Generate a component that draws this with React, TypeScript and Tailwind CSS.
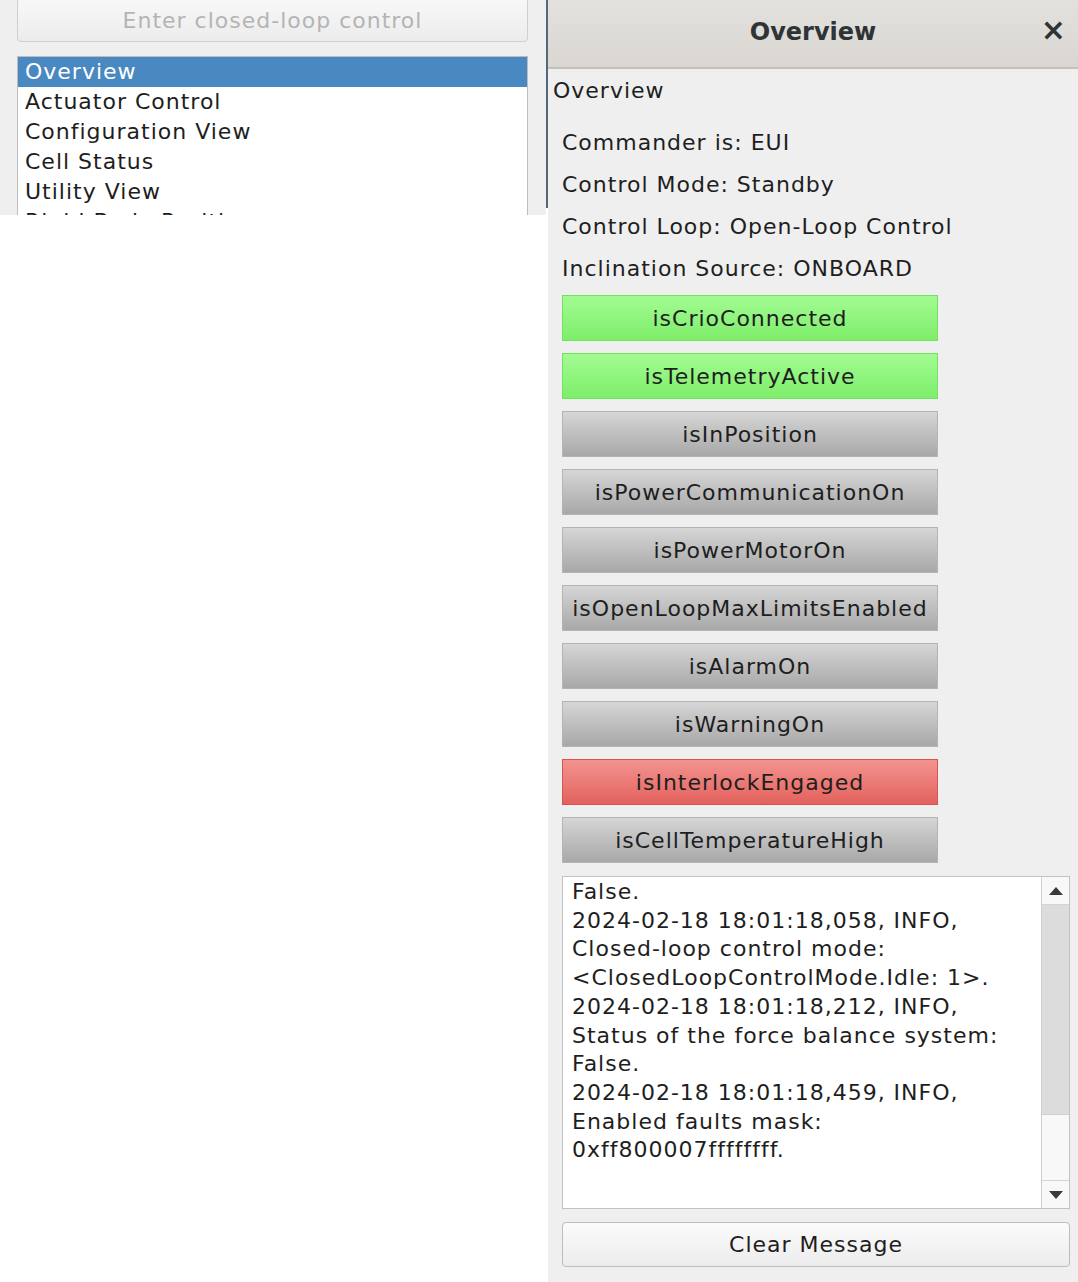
import React from 'react';

const font = { fontFamily: '"DejaVu Sans", "Noto Sans", sans-serif' };

type Flag = { label: string; state: 'on' | 'off' | 'alarm' };

const flags: Flag[] = [
  { label: 'isCrioConnected', state: 'on' },
  { label: 'isTelemetryActive', state: 'on' },
  { label: 'isInPosition', state: 'off' },
  { label: 'isPowerCommunicationOn', state: 'off' },
  { label: 'isPowerMotorOn', state: 'off' },
  { label: 'isOpenLoopMaxLimitsEnabled', state: 'off' },
  { label: 'isAlarmOn', state: 'off' },
  { label: 'isWarningOn', state: 'off' },
  { label: 'isInterlockEngaged', state: 'alarm' },
  { label: 'isCellTemperatureHigh', state: 'off' },
];

const flagStyle = {
  on: 'bg-gradient-to-b from-[#a2fb92] to-[#7eee6a] border-[#74e060]',
  off: 'bg-gradient-to-b from-[#d6d6d6] to-[#a8a8a8] border-[#b4b4b4]',
  alarm: 'bg-gradient-to-b from-[#f29390] to-[#e3615c] border-[#d65550]',
};

const views = ['Overview', 'Actuator Control', 'Configuration View', 'Cell Status', 'Utility View', 'Rigid Body Position'];

const logLines = [
  'False.',
  '2024-02-18 18:01:18,058, INFO,',
  'Closed-loop control mode:',
  '<ClosedLoopControlMode.Idle: 1>.',
  '2024-02-18 18:01:18,212, INFO,',
  'Status of the force balance system:',
  'False.',
  '2024-02-18 18:01:18,459, INFO,',
  'Enabled faults mask:',
  '0xff800007ffffffff.',
];

function ViewList() {
  return (
    <div className="h-[215px] w-[546px] shrink-0 overflow-hidden bg-[#efefef] px-[17px]">
      <button
        disabled
        className="mt-[-2px] flex h-[44px] w-[511px] items-center justify-center rounded-[4px] border border-[#cfcfcf] bg-gradient-to-b from-[#f8f8f8] to-[#ececec] text-[22px] tracking-[1px] text-[#b4b4b4]"
      >
        Enter closed-loop control
      </button>
      <div className="mt-[14px] h-[200px] w-[511px] border border-[#bdbdbd] bg-white">
        {views.map((v, i) => (
          <div
            key={v}
            className={
              'h-[30px] pl-[7px] text-[22px] leading-[30px] tracking-[1px] ' +
              (i === 0 ? 'bg-[#4a88c2] text-white' : 'text-[#1e1e1e]')
            }
          >
            {v}
          </div>
        ))}
      </div>
    </div>
  );
}

function Scrollbar() {
  return (
    <div className="flex w-[28px] flex-col border-l border-[#cfcfcf] bg-[#f4f4f4]">
      <div className="flex h-[28px] items-center justify-center border-b border-[#d4d4d4] bg-[#f8f8f8]">
        <svg width="14" height="8" viewBox="0 0 14 8">
          <path d="M7 0 L14 8 L0 8 Z" fill="#3a3a3a" />
        </svg>
      </div>
      <div className="h-[210px] bg-[#dcdcdc] border-b border-[#cfcfcf]" />
      <div className="flex-1 bg-[#f8f8f8]" />
      <div className="flex h-[28px] items-center justify-center border-t border-[#d4d4d4] bg-[#f8f8f8]">
        <svg width="14" height="8" viewBox="0 0 14 8">
          <path d="M0 0 L14 0 L7 8 Z" fill="#3a3a3a" />
        </svg>
      </div>
    </div>
  );
}

function OverviewDock() {
  return (
    <div className="flex h-[1282px] w-[530px] shrink-0 flex-col bg-[#efefef] tracking-[1px]">
      <div className="relative flex h-[69px] shrink-0 items-center justify-center border-b-2 border-[#c4c1bc] bg-gradient-to-b from-[#e3e1dd] to-[#dad7d3] tracking-normal">
        <span className="mt-[-3px] text-[24px] font-bold text-[#2e3436]">Overview</span>
        <span className="absolute right-[12px] top-[15px] text-[30px] font-bold leading-none text-[#2e3436]">
          ×
        </span>
      </div>
      <div className="pl-[5px] pt-[7px] text-[22px] leading-[30px] text-[#1e1e1e]">Overview</div>
      <div className="flex flex-col px-[14px] pt-[16px]">
        <div className="flex flex-col text-[22px] leading-[42px] text-[#1e1e1e]">
          <div>Commander is: EUI</div>
          <div>Control Mode: Standby</div>
          <div>Control Loop: Open-Loop Control</div>
          <div>Inclination Source: ONBOARD</div>
        </div>
        <div className="mt-[5px] flex flex-col gap-[12px]">
          {flags.map(f => (
            <div
              key={f.label}
              className={
                'flex h-[46px] w-[376px] items-center justify-center border text-[22px] text-[#1e1e1e] ' +
                flagStyle[f.state]
              }
            >
              {f.label}
            </div>
          ))}
        </div>
        <div className="mt-[13px] flex h-[333px] w-[508px] border border-[#c2c2c2] bg-white">
          <div className="flex-1 pl-[9px] pt-[1px] text-[22px] leading-[28.7px] text-[#1e1e1e]">
            {logLines.map((l, i) => (
              <div key={i}>{l}</div>
            ))}
          </div>
          <Scrollbar />
        </div>
        <button className="mt-[13px] flex h-[45px] w-[508px] items-center justify-center rounded-[4px] border border-[#bdbdbd] bg-gradient-to-b from-[#fbfbfb] to-[#ececec] text-[22px] text-[#1e1e1e]">
          Clear Message
        </button>
      </div>
    </div>
  );
}

export default function App() {
  return (
    <div className="flex h-[1282px] w-[1078px] overflow-hidden bg-white" style={font}>
      <ViewList />
      <div className="h-[208px] w-[2px] shrink-0 bg-[#55687a]" />
      <OverviewDock />
    </div>
  );
}
